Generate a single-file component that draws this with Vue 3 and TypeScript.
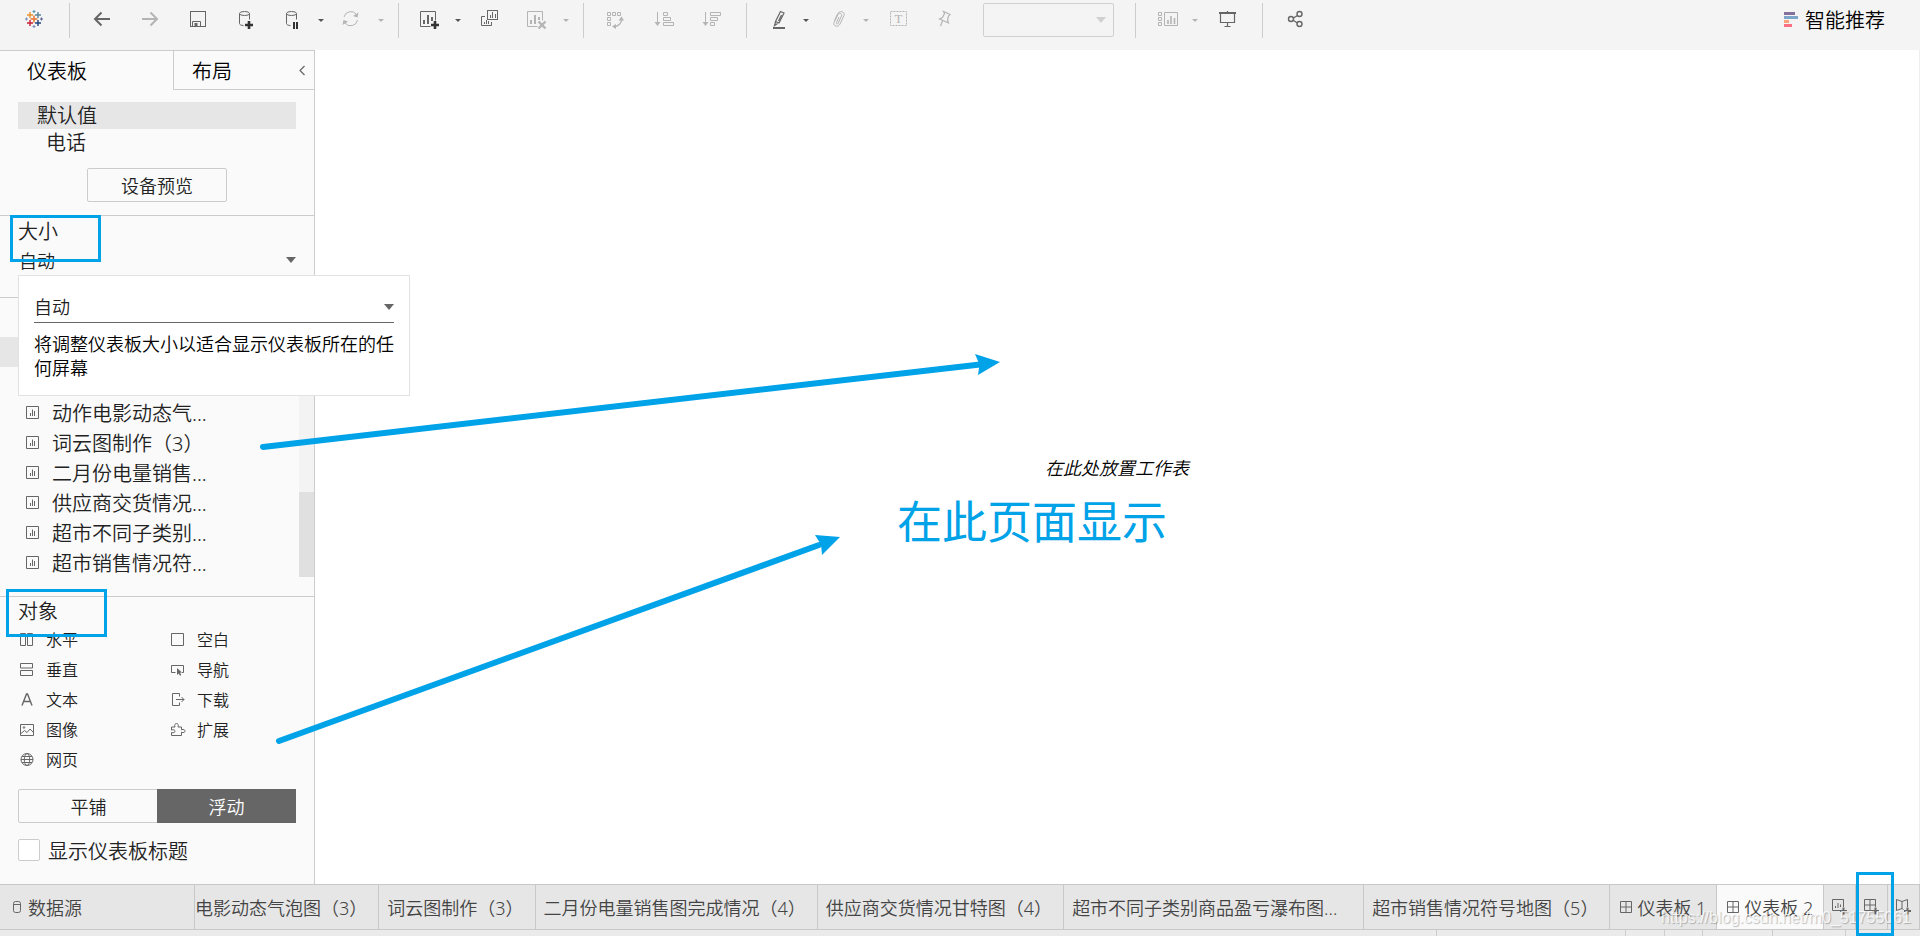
<script setup lang="ts">
import { ref } from 'vue'

interface Tool {
  name: string
  icon: string
  muted?: boolean
  menu?: boolean
}

const icons: Record<string, string> = {
  back: '<path d="M21 11H6M12.500 4.500L6 11l6.500 6.500" stroke-width="2"/>',
  forward: '<path d="M5 11h15M13.500 4.500L20 11l-6.500 6.500" stroke-width="2"/>',
  save: '<rect x="5.500" y="3.500" width="15" height="15"/><path d="M7.500 18.500v-5h8v5"/><path d="M9.500 15h3v3h-3z" fill="currentColor" stroke="none"/>',
  dataAdd: '<ellipse cx="11.500" cy="5.500" rx="5" ry="2"/><path d="M6.500 5.500v10c0 1 1.500 2 4 2M16.500 5.500v6"/><path d="M12 17h8M16 13v8" stroke="#333" stroke-width="2.600"/>',
  dataPause: '<ellipse cx="10.500" cy="5.500" rx="5" ry="2"/><path d="M5.500 5.500v10c0 1 1.500 2 4 2M15.500 5.500v6"/><path d="M13 14v7M16 14v7" stroke="#333" stroke-width="2"/>',
  refresh: '<path d="M3 9a7 7 0 0 1 12.500-2.500M16.500 12A7 7 0 0 1 4 15"/><path d="M17.500 4.500l-1 5-4.500-1.500zM1.500 17l1-5 4.500 1.500z" fill="currentColor" stroke="none"/>',
  sheetAdd: '<path d="M12.500 18.500h-10v-15h15v9"/><path d="M6 12v4M10 7v9M14 9v4" stroke-width="2"/><path d="M13 17h8M17 13v8" stroke="#333" stroke-width="2.600"/>',
  duplicate: '<rect x="9.500" y="2.500" width="10" height="9"/><path d="M7 8.500H3.500v9h10V14M12.500 7v3M14.500 4v6M17.500 6v4M6.500 14v2M8.500 12v4M10.500 13v3"/>',
  clear: '<path d="M11.500 18.500h-10v-15h15v9"/><path d="M5 12v4M9 7v9M13 9v3" stroke-width="2"/><path d="M12.500 13.500l7 7M19.500 13.500l-7 7" stroke-width="2.400"/>',
  swap: '<path d="M4.500 4.500h3v3h-3zM9.500 4.500h3v3h-3zM14.500 4.500h3v3h-3zM4.500 9.500h3v3h-3zM4.500 14.500h3v3h-3z"/><path d="M18.500 12c0 3-3 6-7 6.500" stroke-width="1.400"/><path d="M15.500 12.500l3-4 2.500 4zM13 16v5l-4-2.500z" fill="currentColor" stroke="none"/>',
  ascending: '<path d="M6.500 4v12M12.500 4.500h4v3h-4zM12.500 9.500h7v3h-7zM12.500 14.500h10v3h-10z"/><path d="M3.500 14h6l-3 4z" fill="currentColor" stroke="none"/>',
  descending: '<path d="M6.500 4v12M11.500 4.500h10v3h-10zM11.500 9.500h7v3h-7zM11.500 14.500h4v3h-4z"/><path d="M3.500 14h6l-3 4z" fill="currentColor" stroke="none"/>',
  highlight: '<path d="M14.500 3.500l3.500 1.500-5 10-3.500-1.500zM15.500 7l-3 6M9.500 14l-1 3.500 3-2" stroke-width="1.200"/><path d="M7 20h12" stroke-width="2"/>',
  clip: '<path d="M8.500 12.500l3-6.500c1.500-3.500 8-3 6.500 1.500l-4 8.500c-2 4-7.500 2-6-1.500l4-8c1-2 4.500-1 3.500 1.500l-3.500 7.500c-.500 1-2 .500-1.500-1l2.500-5.500"/>',
  label: '<rect x="4.500" y="3.500" width="16" height="14" stroke-dasharray="2 1"/><text x="12.500" y="15" text-anchor="middle" font-size="13" font-weight="400" font-family="Liberation Serif" fill="currentColor" stroke="none">T</text>',
  pin: '<path d="M9.500 3.500l6.500 3-1.500 1.500-1 4 1 3-9-4 3-1.500 2-4zM8.500 13l-2 5" stroke-width="1.200"/>',
  cards: '<path d="M3.500 4.500h3v3h-3zM3.500 9.500h3v3h-3zM3.500 14.500h3v3h-3zM9.500 4.500h13v13h-13z"/><path d="M13 12v4M16 8v8M19.500 10v6" stroke-width="1.600"/>',
  present: '<path d="M4 5h17" stroke-width="2"/><path d="M5.500 5v9.500h14V5M12.500 3v2M12.500 14.500v4M9.500 18.500h6" stroke-width="1.200"/>',
  share: '<g stroke-width="1.400"><circle cx="17.500" cy="6" r="2.500"/><circle cx="9" cy="11" r="2.500"/><circle cx="17.500" cy="16" r="2.500"/><path d="M11.500 10l4-2.500M11.500 12.500l4 2.500"/></g>',
  sheet: '<path d="M.500.500h12v12H.500zM4.500 7v3M6.500 3.500v6.500M8.500 5v5"/>',
  horizontal: '<path d="M.500.500h5v12h-5zM7.500.500h5v12h-5z"/>',
  vertical: '<path d="M.500.500h12v4.500H.500zM.500 7.500h12v5H.500z"/>',
  text: '<path d="M2 12.500L6.500 1h1L12 12.500M3.500 8.500h7" stroke-width="1.400"/>',
  image: '<path d="M.500 1.500h13v11H.500zM1 10.500l3.500-3 2.500 2 3-3.500 3 3"/><circle cx="4" cy="4.500" r=".800"/>',
  web: '<circle cx="7" cy="6.500" r="6"/><ellipse cx="7" cy="6.500" rx="2.700" ry="6"/><path d="M1 6.500h12M2 3.500h10M2 9.500h10"/>',
  blank: '<path d="M.500.500h12v12H.500z"/>',
  navigate: '<path d="M4.500 9.500h-4v-7h12v7h-1.500"/><path d="M6 5l5 4.500-2 .300 1.300 2.200-1.300.800-1.300-2.300L6 12z" fill="currentColor" stroke="none"/>',
  download: '<path d="M8.500 3.500v-3h-7v12h7v-3M5 6.500h8M10.500 4l2.500 2.500L10.500 9"/>',
  extend: '<path d="M.500 4h3.500c-1-2.500.500-3.500 1.500-3.500S8 1.500 7 4h3.500v2.800c2.500-1 3.500.200 3.500 1.200s-1 2.200-3.500 1.200v3.300H.500V9.500c2.500.800 3.500-.200 3.500-1.200S3 6.200.500 7z"/>',
  dashboard: '<path d="M.500.500h11v11H.500zM6 .500v11M.500 6h11"/>',
  addSheet: '<path d="M8 11.500H.500V.500h11V8M3.500 7v2M6 4v5M8.500 5.500v2.500"/><path d="M8 12h7M11.500 8.500v7" stroke-width="2"/>',
  addDashboard: '<path d="M8 11.500H.500V.500h11V8M6 .500v11M.500 6h11"/><path d="M8 12h7M11.500 8.500v7" stroke-width="2"/>',
  addStory: '<path d="M7.500 10.500L6 9.500l-5.500 2V.500L6 2.500l5.500-2V8M6 2.500v7"/><path d="M8 12h7M11.500 8.500v7" stroke-width="2"/>',
}

const groups: Tool[][] = [
  [
    { name: '后退', icon: 'back' },
    { name: '前进', icon: 'forward', muted: true },
    { name: '保存', icon: 'save' },
    { name: '新建数据源', icon: 'dataAdd' },
    { name: '暂停自动更新', icon: 'dataPause', menu: true },
    { name: '运行更新', icon: 'refresh', muted: true, menu: true },
  ],
  [
    { name: '新建工作表', icon: 'sheetAdd', menu: true },
    { name: '复制', icon: 'duplicate' },
    { name: '清除工作表', icon: 'clear', muted: true, menu: true },
  ],
  [
    { name: '交换行和列', icon: 'swap', muted: true },
    { name: '升序排序', icon: 'ascending', muted: true },
    { name: '降序排序', icon: 'descending', muted: true },
  ],
  [
    { name: '突出显示', icon: 'highlight', menu: true },
    { name: '组成员', icon: 'clip', muted: true, menu: true },
    { name: '显示标记标签', icon: 'label', muted: true },
    { name: '固定轴', icon: 'pin', muted: true },
  ],
]
const viewGroups: Tool[][] = [
  [
    { name: '显示卡', icon: 'cards', muted: true, menu: true },
    { name: '演示模式', icon: 'present' },
  ],
  [{ name: '共享', icon: 'share' }],
]

const sheets = ['动作电影动态气...', '词云图制作（3）', '二月份电量销售...', '供应商交货情况...', '超市不同子类别...', '超市销售情况符...']
const objects = [
  { label: '水平', icon: 'horizontal' },
  { label: '空白', icon: 'blank' },
  { label: '垂直', icon: 'vertical' },
  { label: '导航', icon: 'navigate' },
  { label: '文本', icon: 'text' },
  { label: '下载', icon: 'download' },
  { label: '图像', icon: 'image' },
  { label: '扩展', icon: 'extend' },
  { label: '网页', icon: 'web' },
]
const sheetTabs = ['电影动态气泡图（3）', '词云图制作（3）', '二月份电量销售图完成情况（4）', '供应商交货情况甘特图（4）', '超市不同子类别商品盈亏瀑布图...', '超市销售情况符号地图（5）']
const dashboards = ['仪表板 1', '仪表板 2']
const addButtons = [
  { name: '新建工作表', icon: 'addSheet' },
  { name: '新建仪表板', icon: 'addDashboard' },
  { name: '新建故事', icon: 'addStory' },
]
const statusCells = [189, 39, 38, 70, 73, 75]

const active = ref('仪表板 2')
const placement = ref('浮动')
const showTitle = ref(false)
</script>

<template>
  <div class="app">
    <header class="toolbar">
      <span class="logo">
        <svg width="18" height="18" viewBox="0 0 18 18" fill="none" aria-hidden="true">
          <path d="M5.500 9h7M9 5.500v7" stroke="#e8762d" stroke-width="1.500" />
          <path d="M2 5h6M5 2v6" stroke="#eb912c" stroke-width="1.400" />
          <path d="M10 5h6M13 2v6" stroke="#59879b" stroke-width="1.400" />
          <path d="M2 13h6M5 10v6" stroke="#c72035" stroke-width="1.400" />
          <path d="M10 13h6M13 10v6" stroke="#1f457e" stroke-width="1.400" />
          <path d="M7.500 1.500h3M9 0v3" stroke="#5b9aa8" stroke-width="1.200" />
          <path d="M7.500 16.500h3M9 15v3M0 9h3M1.500 7.500v3" stroke="#7b8fb8" stroke-width="1.200" />
          <path d="M15 9h3M16.500 7.500v3" stroke="#5c6692" stroke-width="1.200" />
        </svg>
      </span>
      <template v-for="(group, g) in groups" :key="g">
        <span class="sep"></span>
        <div class="group">
          <span v-for="t in group" :key="t.name" class="tool" :class="{ muted: t.muted, split: t.menu }">
            <button class="tool-btn" :aria-label="t.name">
              <svg class="ic" width="24" height="24" viewBox="0 0 24 24" v-html="icons[t.icon]"></svg>
            </button>
            <button v-if="t.menu" class="menu-btn" :aria-label="t.name + '菜单'"><i class="caret"></i></button>
          </span>
        </div>
      </template>
      <span class="fit">
        <select aria-label="适合" disabled><option></option></select>
        <i class="fit-arrow"></i>
      </span>
      <template v-for="(group, g) in viewGroups" :key="g">
        <span class="sep" :class="{ wide: g === 0 }"></span>
        <div class="group">
          <span v-for="t in group" :key="t.name" class="tool" :class="{ muted: t.muted, split: t.menu }">
            <button class="tool-btn" :aria-label="t.name">
              <svg class="ic" width="24" height="24" viewBox="0 0 24 24" v-html="icons[t.icon]"></svg>
            </button>
            <button v-if="t.menu" class="menu-btn" :aria-label="t.name + '菜单'"><i class="caret"></i></button>
          </span>
        </div>
      </template>
      <button class="recommend">
        <svg width="14" height="15" viewBox="0 0 14 15" aria-hidden="true">
          <path d="M0 0h11v3H0z" fill="#85709b" />
          <path d="M0 4h14v3H0z" fill="#7ea6cb" />
          <path d="M0 8h5v3H0z" fill="#f9a27c" />
          <path d="M0 12h8v3H0z" fill="#fb6f82" />
        </svg>
        智能推荐
      </button>
    </header>

    <div class="body">
      <aside class="side">
        <div class="side-tabs">
          <button class="side-tab current">仪表板</button>
          <button class="side-tab other">布局</button>
          <button class="collapse" aria-label="折叠">
            <svg class="ic" width="7" height="11" viewBox="0 0 7 11"><path d="M5.500 1L1 5.500 5.500 10" stroke-width="1.200" /></svg>
          </button>
        </div>

        <section class="devices">
          <button class="device selected">默认值</button>
          <button class="device phone">电话</button>
          <button class="preview">设备预览</button>
        </section>

        <section class="size">
          <h2>大小<span class="mark mark-size"></span></h2>
          <button class="size-value">自动<i class="arrow"></i></button>
          <div class="popup">
            <span class="popup-select">
              <select aria-label="大小"><option>自动</option></select>
              <i class="arrow"></i>
            </span>
            <p>将调整仪表板大小以适合显示仪表板所在的任何屏幕</p>
          </div>
        </section>

        <section class="sheets">
          <div class="sheet-list">
            <div class="row hovered"></div>
            <div class="row"></div>
            <button v-for="s in sheets" :key="s" class="row">
              <svg class="ic" width="13" height="13" viewBox="0 0 13 13" v-html="icons.sheet"></svg>{{ s }}
            </button>
          </div>
          <div class="track"><div class="thumb"></div></div>
        </section>

        <section class="objects">
          <h2>对象<span class="mark mark-objects"></span></h2>
          <div class="object-grid">
            <button v-for="o in objects" :key="o.label" class="object">
              <svg class="ic" width="15" height="13" viewBox="0 0 15 13" v-html="icons[o.icon]"></svg>{{ o.label }}
            </button>
          </div>
          <div class="toggle">
            <button v-for="p in ['平铺', '浮动']" :key="p" :class="{ on: placement === p }" @click="placement = p">{{ p }}</button>
          </div>
          <label class="check"><input v-model="showTitle" type="checkbox" />显示仪表板标题</label>
        </section>
      </aside>

      <main class="canvas">
        <span class="hint">在此处放置工作表</span>
      </main>
    </div>

    <footer class="tabs">
      <button class="tab source">
        <svg class="ic" width="8" height="12" viewBox="0 0 8 12"><rect x=".5" y=".5" width="7" height="11" rx="2" /><path d="M.5 3.500h7" /></svg>数据源
      </button>
      <nav class="strip">
        <button v-for="t in sheetTabs" :key="t" class="tab sheet-tab">{{ t }}</button>
        <button v-for="d in dashboards" :key="d" class="tab dash" :class="{ active: active === d }" @click="active = d">
          <svg class="ic" width="12" height="12" viewBox="0 0 12 12" v-html="icons.dashboard"></svg>{{ d }}
        </button>
      </nav>
      <button v-for="b in addButtons" :key="b.icon" class="tab add" :aria-label="b.name">
        <svg class="ic" width="16" height="16" viewBox="0 0 16 16" v-html="icons[b.icon]"></svg>
        <span v-if="b.icon === 'addDashboard'" class="mark mark-add"></span>
      </button>
    </footer>
    <div class="status">
      <span v-for="(w, i) in statusCells" :key="i" :style="{ width: w + 'px' }"></span>
    </div>

    <svg class="arrows" width="1010" height="760" viewBox="0 0 1010 760" aria-hidden="true">
      <g stroke="#00a2e8" stroke-width="6" stroke-linecap="round">
        <path d="M263 447L980 364.500" />
        <path d="M279 741L819 545" />
      </g>
      <path d="M1000 362L975 354l4.500 10.500L978 375zM840 537l-25-2 6 9.500 1 10.500z" fill="#00a2e8" />
    </svg>
    <div class="note">在此页面显示</div>
    <div class="watermark">https://blog.csdn.net/m0_51755061</div>
  </div>
</template>

<style>
body {
  margin: 0;
}
</style>

<style scoped>
.app {
  position: relative;
  display: flex;
  flex-direction: column;
  height: 100vh;
  overflow: hidden;
  background: #fff;
  color: #222;
  font-family: "Noto Sans", "Noto Sans CJK SC", sans-serif;
  font-size: 20px;
  font-weight: 350;
}
.app * {
  box-sizing: border-box;
}
button {
  margin: 0;
  padding: 0;
  border: 0;
  background: none;
  color: inherit;
  font: inherit;
  text-align: left;
  white-space: nowrap;
}
select {
  appearance: none;
  width: 100%;
  margin: 0;
  border-radius: 0;
  background: none;
  color: inherit;
  font: inherit;
}
h2 {
  position: relative;
  margin: 0;
  padding-left: 18px;
  font-size: 20px;
  font-weight: inherit;
  line-height: 25px;
}
.ic {
  flex: none;
  fill: none;
  stroke: currentColor;
  color: #666;
}
.toolbar {
  display: flex;
  align-items: flex-start;
  flex: none;
  height: 50px;
  padding-top: 3px;
  background: #f4f4f4;
}
.logo {
  display: flex;
  width: 57px;
  height: 32px;
  padding-left: 25px;
  align-items: center;
}
.sep {
  width: 1px;
  height: 35px;
  margin: 0 8px 0 12px;
  background: #ccc;
}
.sep.wide {
  margin-left: 21px;
}
.group {
  display: flex;
  gap: 2px;
}
.tool {
  display: flex;
  height: 34px;
}
.split {
  margin-right: 3px;
}
.split:last-child {
  margin-right: 1px;
}
.tool-btn {
  display: flex;
  align-items: center;
  justify-content: center;
  width: 46px;
}
.menu-btn {
  display: flex;
  align-items: center;
  justify-content: center;
  width: 9px;
}
.muted .ic {
  color: #b4b4b4;
}
.caret {
  border: solid transparent;
  border-width: 3px 3px 0;
  border-top-color: #555;
}
.muted .caret {
  border-top-color: #b4b4b4;
}
.fit {
  position: relative;
  width: 131px;
  margin-left: 14px;
}
.fit select {
  display: block;
  height: 34px;
  border: 1px solid #d0d0d0;
  border-radius: 2px;
  opacity: 1;
}
.fit-arrow {
  position: absolute;
  top: 14px;
  right: 8px;
  border: solid transparent;
  border-width: 6px 5px 0;
  border-top-color: #d0d0d0;
}
.recommend {
  display: flex;
  align-items: center;
  gap: 7px;
  height: 32px;
  margin-left: auto;
  margin-right: 35px;
  color: #000;
}
.body {
  display: flex;
  flex: 1;
  min-height: 0;
}
.side {
  display: flex;
  flex-direction: column;
  flex: none;
  width: 315px;
  border-top: 1px solid #ccc;
  border-right: 1px solid #ccc;
  background: #fafafa;
}
.side-tabs {
  display: flex;
  flex: none;
  height: 39px;
  color: #000;
}
.side-tab.current {
  width: 173px;
  padding-left: 27px;
}
.side-tab.other {
  flex: 1;
  padding-left: 18px;
  border-left: 1px solid #ccc;
  border-bottom: 1px solid #ccc;
}
.collapse {
  display: flex;
  align-items: center;
  width: 15px;
  border-bottom: 1px solid #ccc;
}
.devices {
  display: flex;
  flex-direction: column;
  flex: none;
  padding: 12px 18px 13px;
}
.device {
  height: 27px;
  padding-left: 19px;
  line-height: 28px;
}
.device.selected {
  background: #e6e6e6;
}
.device.phone {
  padding-left: 28px;
}
.preview {
  align-self: center;
  width: 140px;
  height: 34px;
  margin-top: 12px;
  border: 1px solid #ccc;
  border-radius: 2px;
  font-size: 18px;
  text-align: center;
}
.size {
  position: relative;
  flex: none;
  padding: 3px 0 21px;
  border-top: 1px solid #ccc;
}
.size-value {
  display: flex;
  align-items: center;
  justify-content: space-between;
  width: 100%;
  height: 32px;
  padding: 0 18px 0 19px;
  font-size: 18px;
}
.arrow {
  border: solid transparent;
  border-width: 6px 5px 0;
  border-top-color: #666;
}
.popup {
  position: absolute;
  z-index: 2;
  top: 59px;
  left: 18px;
  width: 392px;
  padding: 17px 15px 15px;
  border: 1px solid #e2e2e2;
  background: #fff;
  font-size: 18px;
}
.popup-select {
  display: flex;
  align-items: center;
  height: 30px;
  padding-bottom: 1px;
  border-bottom: 1px solid #666;
}
.popup-select select {
  border: 0;
  padding: 0;
}
.popup p {
  margin: 9px 0 0;
  color: #000;
  line-height: 24px;
}
.sheets {
  display: flex;
  align-items: flex-end;
  flex: 1;
  min-height: 0;
  padding-bottom: 19px;
  border-top: 1px solid #ccc;
  overflow: hidden;
}
.sheet-list {
  flex: 1;
}
.row {
  display: flex;
  align-items: center;
  gap: 13px;
  width: 100%;
  height: 30px;
  padding-left: 26px;
}
.row.hovered {
  background: #e6e6e6;
}
.track {
  display: flex;
  align-items: flex-end;
  align-self: stretch;
  width: 15px;
  margin-top: 39px;
  background: #f3f3f3;
}
.thumb {
  width: 100%;
  height: 85px;
  background: #e0e0e0;
}
.objects {
  flex: none;
  padding: 2px 0 23px;
  border-top: 1px solid #ccc;
}
.object-grid {
  display: grid;
  grid-template-columns: 151px 1fr;
  padding-left: 20px;
}
.object {
  display: flex;
  align-items: center;
  gap: 11px;
  height: 30px;
  font-size: 16px;
}
.toggle {
  display: flex;
  height: 34px;
  margin: 15px 18px 16px;
  border: 1px solid #ccc;
  border-radius: 2px;
}
.toggle button {
  flex: 1;
  font-size: 18px;
  text-align: center;
}
.toggle button.on {
  margin: -1px;
  background: #666;
  color: #fff;
}
.check {
  display: flex;
  align-items: center;
  gap: 8px;
  height: 22px;
  padding-left: 18px;
}
.check input {
  appearance: none;
  width: 22px;
  height: 22px;
  margin: 0;
  border: 1px solid #ccc;
  border-radius: 2px;
  background: #fff;
}
.canvas {
  display: flex;
  flex: 1;
  align-items: center;
  justify-content: center;
  border-right: 1px solid #eee;
}
.hint {
  color: #000;
  font-size: 18px;
  font-style: italic;
}
.tabs {
  display: flex;
  flex: none;
  height: 46px;
  border-top: 1px solid #c8c8c8;
  border-bottom: 1px solid #c8c8c8;
  background: #e6e6e6;
  font-size: 18px;
  color: #444;
}
.strip {
  display: flex;
  min-width: 0;
  overflow: hidden;
}
.tab {
  position: relative;
  display: flex;
  flex: none;
  align-items: center;
  border-right: 1px solid #c8c8c8;
}
.source {
  width: 195px;
  gap: 7px;
  padding-left: 13px;
}
.sheet-tab {
  padding: 0 11px 0 8px;
}
.sheet-tab:first-child {
  padding-left: 0;
}
.sheet-tab:nth-child(5) {
  width: 300px;
}
.dash {
  gap: 5px;
  padding: 0 10px;
}
.dash.active {
  background: #fafafa;
}
.add {
  flex: 1;
  justify-content: center;
}
.status {
  display: flex;
  flex: none;
  justify-content: flex-end;
  height: 6px;
  background: #ebebeb;
}
.status span {
  border-left: 1px solid #ccc;
}
.mark {
  position: absolute;
  border: 3px solid #00a2e8;
  pointer-events: none;
}
.mark-size {
  top: -4px;
  left: 10px;
  width: 91px;
  height: 47px;
}
.mark-objects {
  top: -10px;
  left: 6px;
  width: 101px;
  height: 48px;
}
.mark-add {
  top: -13px;
  right: -7px;
  bottom: -7px;
  left: 0;
  z-index: 3;
}
.arrows {
  position: absolute;
  top: 0;
  left: 0;
  z-index: 3;
  fill: none;
  pointer-events: none;
}
.note {
  position: absolute;
  top: 492px;
  left: 897px;
  color: #00a2e8;
  font-size: 45px;
  font-weight: 400;
  line-height: 60px;
}
.watermark {
  position: absolute;
  right: 9px;
  bottom: 6px;
  color: rgba(255, 255, 255, 0.8);
  font-family: "Liberation Sans", sans-serif;
  font-size: 16px;
  line-height: 24px;
  text-shadow: 1px 1px 1px rgba(0, 0, 0, 0.25);
  pointer-events: none;
}
</style>
